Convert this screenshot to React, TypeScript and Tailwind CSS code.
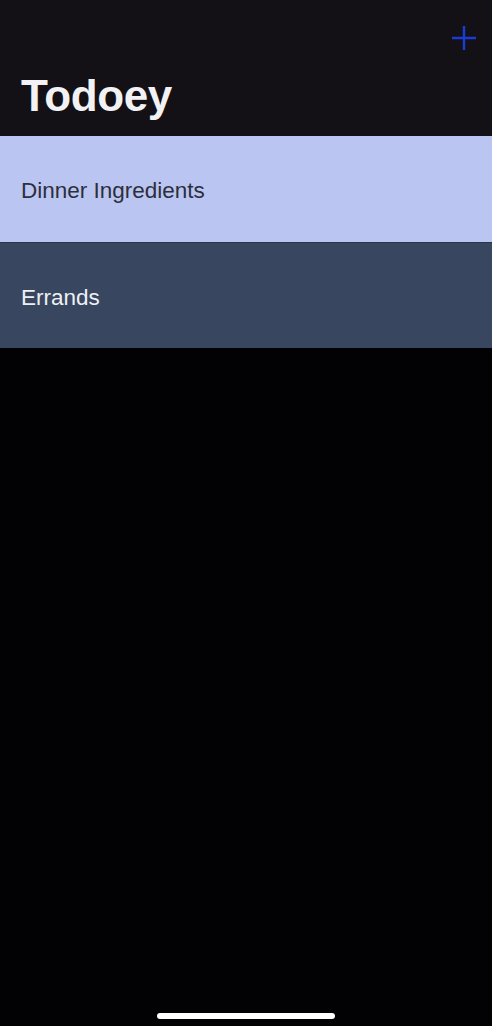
const categories = [
  { name: "Dinner Ingredients", bg: "bg-[#bbc5f1]", text: "text-[#2c2f3d]" },
  { name: "Errands", bg: "bg-[#38465f]", text: "text-[#eef0f5]" },
];

export default function App() {
  return (
    <div className="min-h-[1026px] bg-[#020104] flex flex-col relative" style={{ fontFamily: '"Liberation Sans", Arial, sans-serif' }}>
      {/* nav bar */}
      <div className="bg-[#131116] h-[136px] flex flex-col px-[21px]">
        <div className="flex justify-end pt-[26px] -mr-[5px]">
          <svg width="24" height="24" viewBox="0 0 24 24" className="text-[#1b3bd8]">
            <path d="M12 0v24M0 12h24" stroke="currentColor" strokeWidth="2.4" fill="none" />
          </svg>
        </div>
        <h1 className="text-[44px] font-bold text-[#f2f2f4] leading-none mt-[24px] tracking-[-0.4px]">Todoey</h1>
      </div>

      {/* list */}
      <div className="flex flex-col">
        {categories.map((c, i) => (
          <div
            key={c.name}
            className={`${c.bg} h-[106px] flex items-center px-[21px] pt-[4px] ${i > 0 ? "border-t border-[#2b3449]" : ""}`}
          >
            <span className={`${c.text} text-[22.5px]`}>{c.name}</span>
          </div>
        ))}
      </div>

      {/* home indicator */}
      <div className="absolute bottom-[7px] left-0 right-0 flex justify-center">
        <div className="w-[178px] h-[6px] rounded-full bg-white" />
      </div>
    </div>
  );
}
